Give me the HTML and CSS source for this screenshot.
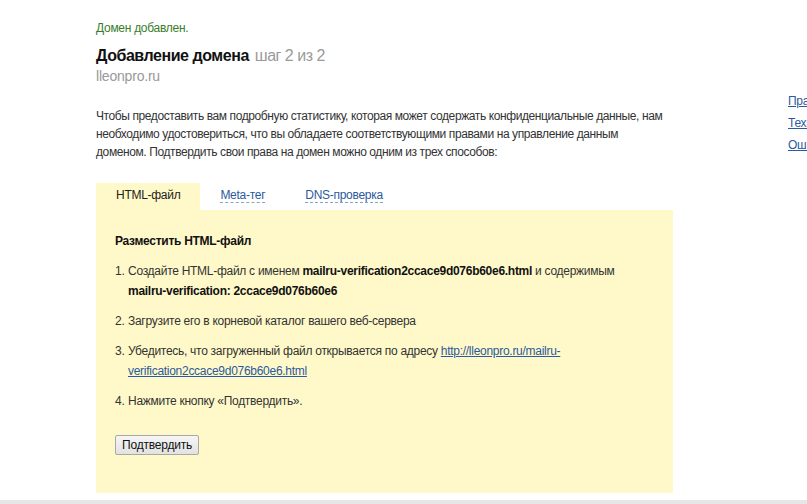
FILE: index.html
```
<!DOCTYPE html>
<html lang="ru">
<head>
<meta charset="utf-8">
<title>Добавление домена</title>
<link rel="stylesheet" href="styles.css">
</head>
<body>
<div class="page">
  <div class="main">
    <div class="notice">Домен добавлен.</div>
    <h1 class="title">Добавление домена <span class="step">шаг 2 из 2</span></h1>
    <div class="domain">lleonpro.ru</div>
    <p class="intro">Чтобы предоставить вам подробную статистику, которая может содержать конфиденциальные данные, нам необходимо удостовериться, что вы обладаете соответствующими правами на управление данным доменом. Подтвердить свои права на домен можно одним из трех способов:</p>
    <div class="tabs">
      <div class="tab tab-active">HTML-файл</div>
      <div class="tab"><span class="tab-link">Meta-тег</span></div>
      <div class="tab"><span class="tab-link">DNS-проверка</span></div>
    </div>
    <div class="panel">
      <div class="panel-title">Разместить HTML-файл</div>
      <ol class="steps">
        <li>Создайте HTML-файл с именем <b>mailru-verification2ccace9d076b60e6.html</b> и содержимым <b>mailru-verification: 2ccace9d076b60e6</b></li>
        <li>Загрузите его в корневой каталог вашего веб-сервера</li>
        <li>Убедитесь, что загруженный файл открывается по адресу <a class="link" href="#">http://lleonpro.ru/mailru-verification2ccace9d076b60e6.html</a></li>
        <li>Нажмите кнопку «Подтвердить».</li>
      </ol>
      <button class="btn" type="button">Подтвердить</button>
    </div>
  </div>
  <div class="side">
    <a class="side-link" href="#">Правила</a>
    <a class="side-link" href="#">Техподдержка</a>
    <a class="side-link" href="#">Ошибки</a>
  </div>
</div>
<div class="footer"></div>
</body>
</html>
```
FILE: styles.css
```
html, body {
  margin: 0;
  padding: 0;
  overflow: hidden;
}
body {
  font-family: "Liberation Sans", Arial, sans-serif;
  font-size: 12px;
  letter-spacing: -0.28px;
  color: #333;
  background: #fff;
  width: 807px;
  height: 504px;
}
.page {
  display: flex;
  padding: 20px 0 0 96px;
  gap: 115px;
  height: 480px;
}
.main {
  width: 577px;
  flex: none;
  display: flex;
  flex-direction: column;
}
.notice {
  color: #3a7d2c;
  line-height: 16px;
}
.title {
  margin: 10px 0 0;
  font-size: 16px;
  line-height: 20px;
  font-weight: bold;
  letter-spacing: -0.45px;
  color: #111;
}
.step {
  margin-left: 2px;
  font-weight: normal;
  letter-spacing: -0.5px;
  color: #9a9a9a;
}
.domain {
  margin-top: 1px;
  font-size: 14px;
  line-height: 18px;
  letter-spacing: -0.2px;
  color: #999;
}
.intro {
  margin: 22px 0 0;
  max-width: 570px;
  line-height: 18px;
  letter-spacing: -0.4px;
}
.tabs {
  display: flex;
  margin-top: 22px;
  height: 27px;
}
.tab {
  padding: 0 20px;
  line-height: 25px;
}
.tab-active {
  background: #fff9c9;
  color: #222;
}
.tab-link {
  color: #2b5a9e;
  border-bottom: 1px dashed #8aa2c8;
}
.panel {
  background: #fff9c9;
  padding: 24px 19px 38px;
}
.panel-title {
  font-weight: bold;
  line-height: 14px;
  color: #111;
}
.steps {
  list-style: none;
  counter-reset: step;
  margin: 13px 0 0;
  padding: 0 0 0 13px;
}
.steps li {
  counter-increment: step;
  line-height: 20px;
  margin-bottom: 10px;
}
.steps li:last-child {
  margin-bottom: 0;
}
.steps li::before {
  content: counter(step) ".";
  display: inline-block;
  width: 13px;
  margin-left: -13px;
}
.steps b {
  color: #111;
}
.link {
  color: #2b5a9e;
}
.btn {
  margin-top: 24px;
  align-self: flex-start;
  font-family: "Liberation Sans", Arial, sans-serif;
  font-size: 12px;
  letter-spacing: -0.2px;
  color: #111;
  height: 20px;
  padding: 0 6px;
  border: 1px solid #a8a8a8;
  border-radius: 2px;
  background: linear-gradient(#f6f6f6, #e2e2e2);
}
.side {
  display: flex;
  flex-direction: column;
  gap: 6px;
  padding-top: 73px;
  white-space: nowrap;
}
.side-link {
  color: #2b5a9e;
  line-height: 16px;
}
.footer {
  height: 4px;
  background: #e6e6e6;
}
```
